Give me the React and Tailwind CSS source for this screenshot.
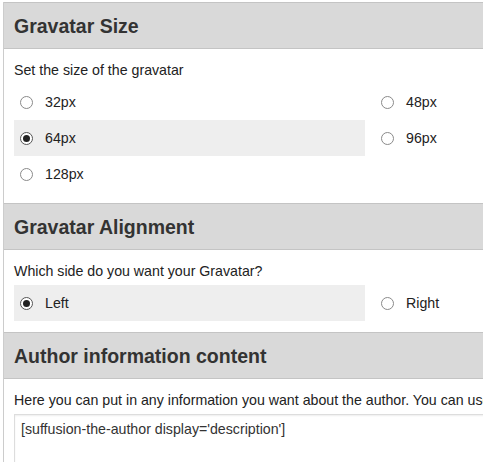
import React from "react";

function Radio({ checked }) {
  return (
    <span
      className={
        "flex h-[13px] w-[13px] shrink-0 items-center justify-center rounded-full border bg-white " +
        (checked ? "border-[#555555]" : "border-[#8a8a8a]")
      }
    >
      {checked ? <span className="block h-[7px] w-[7px] rounded-full bg-[#222222]" /> : null}
    </span>
  );
}

function Option({ label, checked }) {
  return (
    <div
      className={
        "flex h-[36px] items-center pl-[6px] " + (checked ? "bg-[#eeeeee]" : "")
      }
    >
      <Radio checked={checked} />
      <span className="ml-[12px] text-[14.2px] leading-[20px] text-[#222222]">{label}</span>
    </div>
  );
}

function Header({ children }) {
  return (
    <div className="flex h-[47px] items-center border-y border-[#c4c4c4] bg-[#d9d9d9] px-[10px]">
      <h3 className="text-[19.5px] font-bold leading-[24px] text-[#333333]">{children}</h3>
    </div>
  );
}

function Desc({ children }) {
  return (
    <p className="mb-[4px] whitespace-nowrap text-[14.2px] leading-[20px] text-[#222222]">{children}</p>
  );
}

export default function App() {
  return (
    <div className="h-[462px] w-[483px] overflow-hidden bg-white font-['Liberation_Sans',Arial,sans-serif]">
      <div className="pl-[3px] pt-[2px]">
        <div className="w-[760px] border-l border-[#cccccc]">
          <Header>Gravatar Size</Header>
          <div className="px-[10px] pb-[11px] pt-[11px]">
            <Desc>Set the size of the gravatar</Desc>
            <div className="grid grid-cols-[351px_351px] gap-x-[10px]">
              <Option label="32px" />
              <Option label="48px" />
              <Option label="64px" checked />
              <Option label="96px" />
              <Option label="128px" />
            </div>
          </div>

          <Header>Gravatar Alignment</Header>
          <div className="px-[10px] pb-[11px] pt-[11px]">
            <Desc>Which side do you want your Gravatar?</Desc>
            <div className="grid grid-cols-[351px_351px] gap-x-[10px]">
              <Option label="Left" checked />
              <Option label="Right" />
            </div>
          </div>

          <Header>Author information content</Header>
          <div className="px-[10px] pb-[11px] pt-[11px]">
            <Desc>
              Here you can put in any information you want about the author. You can use shortcodes here.
            </Desc>
            <div className="h-[120px] w-[700px] border border-[#dddddd] bg-white px-[6px] pt-[2px] shadow-[inset_0_1px_2px_rgba(0,0,0,0.07)]">
              <span className="text-[14.2px] leading-[16px] text-[#333333]">
                [suffusion-the-author display='description']
              </span>
            </div>
          </div>
        </div>
      </div>
    </div>
  );
}
